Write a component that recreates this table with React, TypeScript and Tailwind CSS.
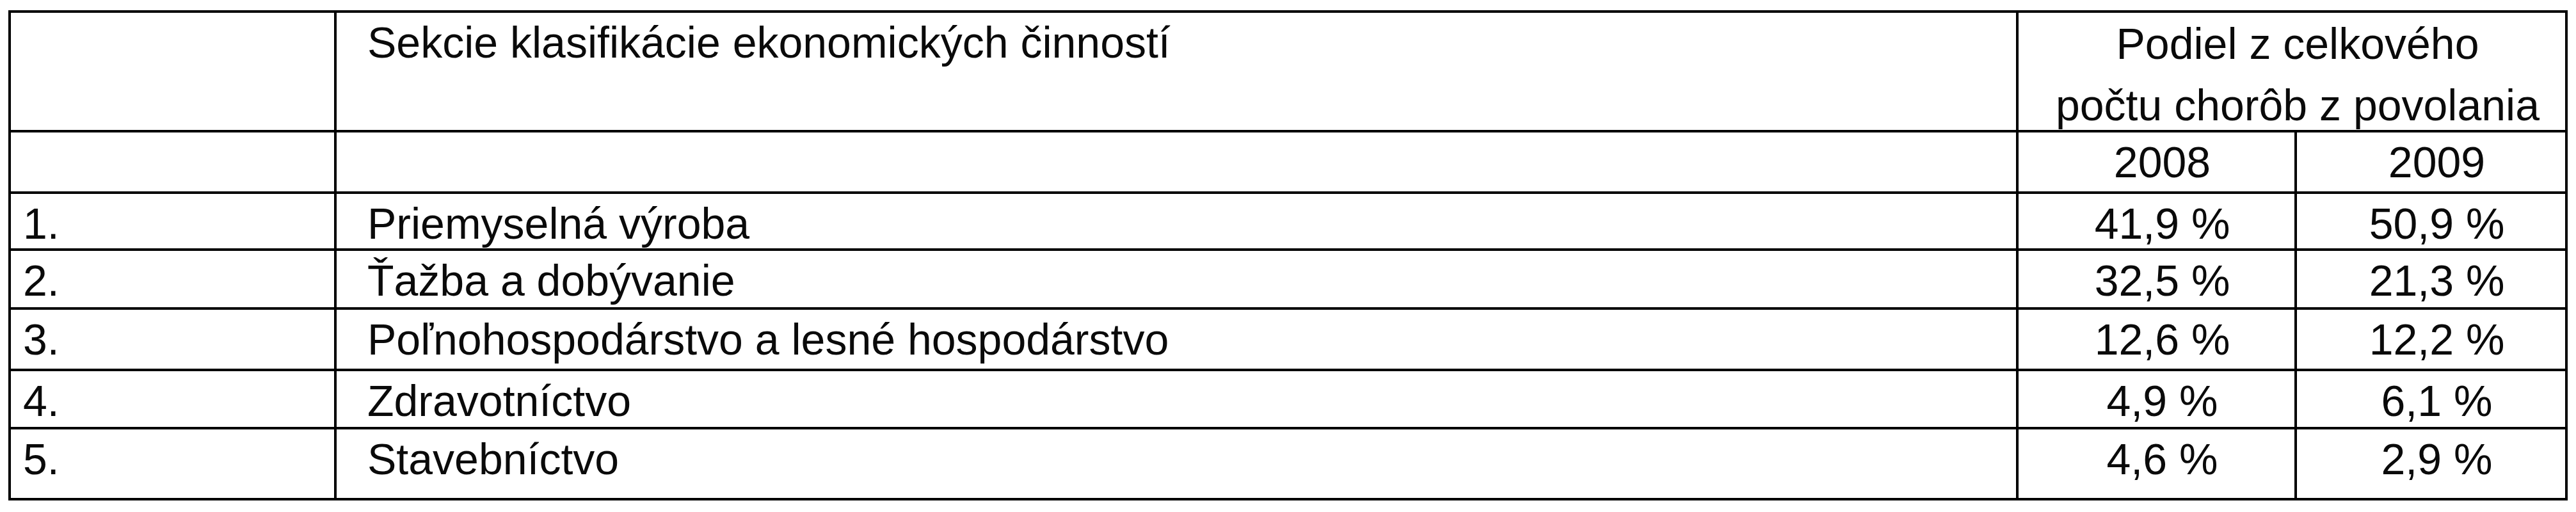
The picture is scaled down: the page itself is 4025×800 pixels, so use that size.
import React from "react";

const rows: { n: string; name: string; a: string; b: string; h: string }[] = [
  { n: "1.", name: "Priemyselná výroba", a: "41,9 %", b: "50,9 %", h: "h-[89px]" },
  { n: "2.", name: "Ťažba a dobývanie", a: "32,5 %", b: "21,3 %", h: "h-[92px]" },
  { n: "3.", name: "Poľnohospodárstvo a lesné hospodárstvo", a: "12,6 %", b: "12,2 %", h: "h-[96px]" },
  { n: "4.", name: "Zdravotníctvo", a: "4,9 %", b: "6,1 %", h: "h-[91px]" },
  { n: "5.", name: "Stavebníctvo", a: "4,6 %", b: "2,9 %", h: "h-[111px]" },
];

const cell = "border-r-4 border-b-4 border-black box-border";
const txt = "text-[68px] leading-none pt-[12px] whitespace-nowrap";

export default function App() {
  return (
    <div
      className="w-[4025px] h-[800px] bg-white text-[#0a0a0a] pl-[13px] pt-[16px]"
      style={{ fontFamily: '"Liberation Sans", Arial, sans-serif' }}
    >
      <div className="grid w-fit grid-cols-[509px_2628px_435px_423px] border-l-4 border-t-4 border-black box-content">
        {/* header row */}
        <div className={`${cell} h-[187px]`} />
        <div className={`${cell} h-[187px] pl-[48px] ${txt}`}>
          Sekcie klasifikácie ekonomických činností
        </div>
        <div className={`${cell} col-span-2 h-[187px] pl-[18px] text-center text-[68px] leading-[96px] whitespace-nowrap`}>
          Podiel z celkového
          <br />
          počtu chorôb z povolania
        </div>

        {/* years row */}
        <div className={`${cell} h-[96px]`} />
        <div className={`${cell} h-[96px]`} />
        <div className={`${cell} h-[96px] pl-[18px] text-center ${txt}`}>2008</div>
        <div className={`${cell} h-[96px] pl-[18px] text-center ${txt}`}>2009</div>

        {rows.map((r) => (
          <React.Fragment key={r.n}>
            <div className={`${cell} ${r.h} pl-[19px] ${txt}`}>{r.n}</div>
            <div className={`${cell} ${r.h} pl-[48px] ${txt}`}>{r.name}</div>
            <div className={`${cell} ${r.h} pl-[18px] text-center ${txt}`}>{r.a}</div>
            <div className={`${cell} ${r.h} pl-[18px] text-center ${txt}`}>{r.b}</div>
          </React.Fragment>
        ))}
      </div>
    </div>
  );
}
